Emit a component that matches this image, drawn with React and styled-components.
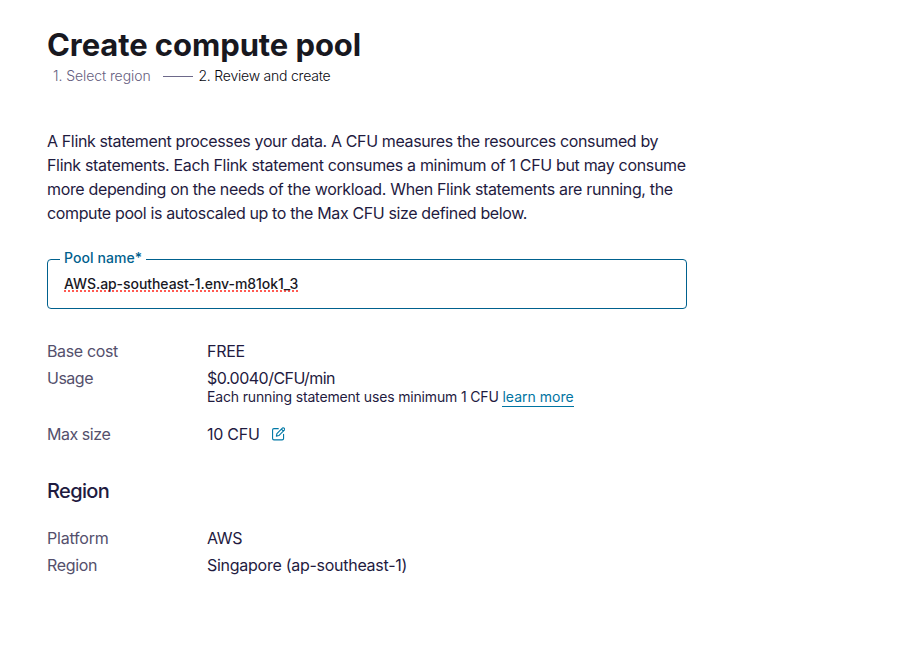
import React from 'react';
import styled, { createGlobalStyle } from 'styled-components';

const Global = createGlobalStyle`
  * { box-sizing: border-box; }
  body { margin: 0; background: #fff; font-family: Inter, "Liberation Sans", sans-serif; color: #1f1b3f; }
`;
const Page = styled.main`width: 687px; padding: 27px 0 0 47px;`;
const Title = styled.h1`margin: 0; font-size: 31px; line-height: 36px; font-weight: 700; letter-spacing: -0.08px; color: #18181f; white-space: nowrap;`;
const Steps = styled.ol`display: flex; align-items: center; list-style: none; margin: 3px 0 0; padding: 0 0 0 6px; height: 20px; font-size: 14px; font-weight: 300; line-height: 20px;`;
const Step = styled.li`color: ${p => (p.$active ? '#08080f' : '#666080')}; white-space: nowrap; letter-spacing: ${p => (p.$active ? -0.22 : -0.08)}px; width: ${p => (p.$active ? 'auto' : '98px')};`;
const StepLine = styled.li`width: 30px; height: 1px; background: #6d698a; margin: 0 5.5px 0 12px;`;
const Intro = styled.p`margin: 43px 0 0; font-size: 16px; line-height: 24px;`;
const Line = styled.span`display: block; white-space: nowrap; letter-spacing: ${p => p.$ls}px;`;
const Field = styled.fieldset`margin: 24px 0 0; width: 640px; height: 60px; border: 1px solid #00618e; border-radius: 4px; padding: 0 16px 0 12px;`;
const Legend = styled.legend`padding: 0 4px; font-size: 14px; line-height: 18px; height: 20px; font-weight: 500; letter-spacing: 0.08px; color: #00618e;`;
const Value = styled.div`padding: 5px 0 0 4px; font-size: 14px; line-height: 20px; font-weight: 500; letter-spacing: -0.06px; color: #18181f;`;
const Spell = styled.span`text-decoration: underline dotted #ff5a52 2px; text-underline-offset: 1px; text-decoration-skip-ink: none;`;
const List = styled.dl`display: grid; grid-template-columns: 160px 1fr; row-gap: 3px; margin: ${p => p.$top}px 0 0; font-size: 16px; line-height: 24px;`;
const Term = styled.dt`color: #54506c; letter-spacing: ${p => p.$ls ?? -0.35}px;`;
const Detail = styled.dd`margin: 0; display: flex; align-items: center; white-space: nowrap; letter-spacing: -0.27px;`;
const Usage = styled.dd`margin: 0; white-space: nowrap;`;
const Price = styled.div`letter-spacing: -0.52px;`;
const Note = styled.div`font-size: 14px; line-height: 20px; margin-top: -3px; padding-bottom: 12px; letter-spacing: -0.16px;`;
const Link = styled.a`color: #0074a2; border-bottom: 1px solid #0074a2; padding-bottom: 1px; letter-spacing: 0;`;
const Edit = styled.svg`width: 13.5px; height: 13.5px; margin: -0.5px 0 0 12px;`;
const Heading = styled.h2`margin: 31px 0 0; font-size: 20px; line-height: 28px; font-weight: 500; letter-spacing: -0.65px;`;

export default function App() {
  return (
    <><Global /><Page>
      <Title>Create compute pool</Title>
      <Steps><Step>1. Select region</Step><StepLine /><Step $active>2. Review and create</Step></Steps>
      <Intro>
        <Line $ls={-0.37}>A Flink statement processes your data. A CFU measures the resources consumed by</Line>
        <Line $ls={-0.335}>Flink statements. Each Flink statement consumes a minimum of 1 CFU but may consume</Line>
        <Line $ls={-0.345}>more depending on the needs of the workload. When Flink statements are running, the</Line>
        <Line $ls={-0.37}>compute pool is autoscaled up to the Max CFU size defined below.</Line>
      </Intro>
      <Field><Legend>Pool name*</Legend><Value><Spell>AWS.ap-southeast-1.env-m81ok1_3</Spell></Value></Field>
      <List $top={30}>
        <Term>Base cost</Term><Detail>FREE</Detail>
        <Term $ls={-0.5}>Usage</Term><Usage><Price>$0.0040/CFU/min</Price><Note>Each running statement uses minimum 1 CFU <Link>learn more</Link></Note></Usage>
        <Term $ls={-0.45}>Max size</Term><Detail>10 CFU<Edit viewBox="0 0 14 14" fill="none" stroke="#0078a6" strokeWidth="1.15" strokeLinejoin="round" strokeLinecap="round"><path d="M6.5 1.7H2Q.6 1.7.6 3.2V12Q.6 13.4 2 13.4h8.5q1.5 0 1.5-1.4V7.5M4.5 9.5l.6-2.6L11 1q.6-.5 1.2 0l.8.8q.5.6 0 1.2L7.1 8.9zM9.8 2.3l2 2" /></Edit></Detail>
      </List>
      <Heading>Region</Heading>
      <List $top={21}>
        <Term $ls={-0.22}>Platform</Term><Detail>AWS</Detail>
        <Term $ls={-0.35}>Region</Term><Detail>Singapore (ap-southeast-1)</Detail>
      </List>
    </Page></>
  );
}
